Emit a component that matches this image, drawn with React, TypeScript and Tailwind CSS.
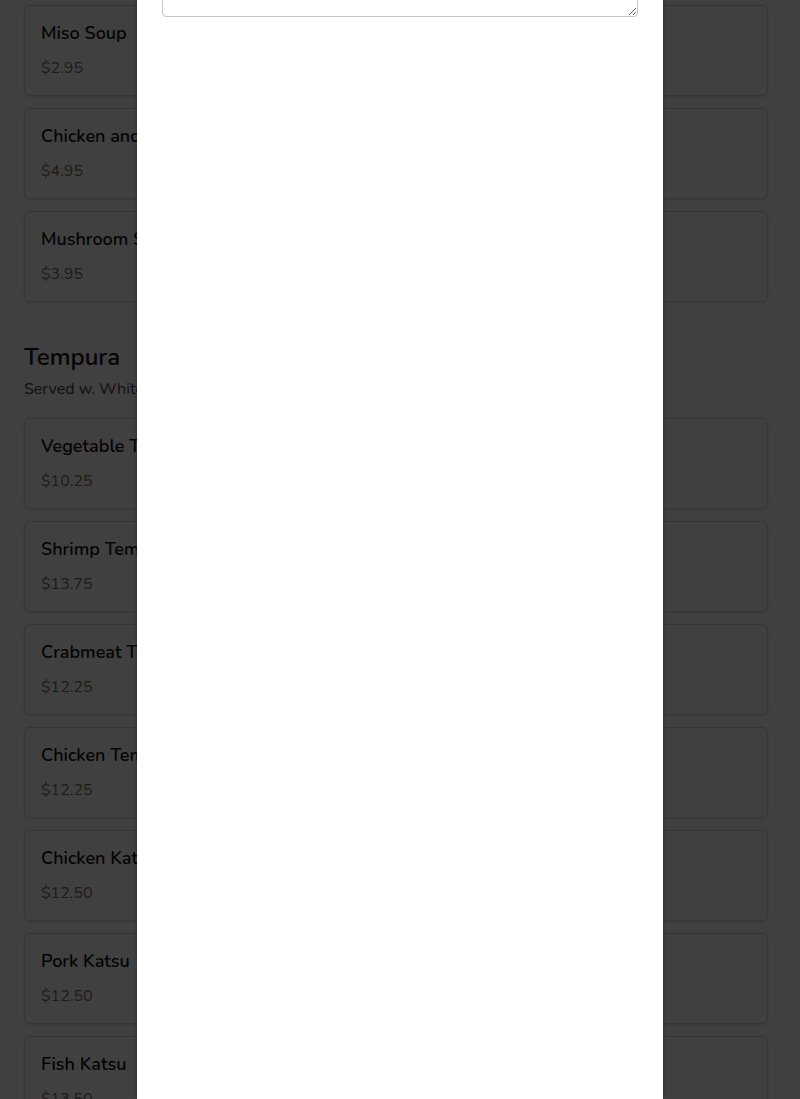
const soups = [
  { name: 'Egg Drop Soup', price: '$2.95' },
  { name: 'Miso Soup', price: '$2.95' },
  { name: 'Chicken and Corn Soup', price: '$4.95' },
  { name: 'Mushroom Soup', price: '$3.95' },
]

const tempura = [
  { name: 'Vegetable Tempura', price: '$10.25' },
  { name: 'Shrimp Tempura', price: '$13.75' },
  { name: 'Crabmeat Tempura', price: '$12.25' },
  { name: 'Chicken Tempura', price: '$12.25' },
  { name: 'Chicken Katsu', price: '$12.50' },
  { name: 'Pork Katsu', price: '$12.50' },
  { name: 'Fish Katsu', price: '$13.50' },
]

function MenuCard({ name, price }: { name: string; price: string }) {
  return (
    <div className="rounded-md border border-[#d6d6d6] bg-white px-4 pt-[13px] pb-[15px] shadow-[0_1px_3px_rgba(0,0,0,0.12)]">
      <h3 className="text-[18px] leading-7 font-semibold text-[#111]">{name}</h3>
      <p className="mt-[9px] text-[16px] leading-6 text-[#7a6f62]">{price}</p>
    </div>
  )
}

export default function App() {
  return (
    <div className="relative h-[1099px] overflow-hidden bg-white font-['Nunito','Noto_Sans',sans-serif]">
      <div className="-mt-[98px] pl-6 pr-8">
        <section className="flex flex-col gap-3">
          {soups.map((s) => (
            <MenuCard key={s.name} {...s} />
          ))}
        </section>

        <section className="mt-[39px]">
          <h2 className="text-[24px] leading-8 font-semibold text-[#111]">Tempura</h2>
          <p className="mt-[4px] text-[16px] leading-6 text-[#444]">Served w. White Rice</p>
          <div className="mt-[17px] flex flex-col gap-3">
            {tempura.map((t) => (
              <MenuCard key={t.name} {...t} />
            ))}
          </div>
        </section>
      </div>

      {/* modal overlay */}
      <div className="fixed inset-0 flex justify-center bg-black/75">
        <div className="flex h-full w-[526px] flex-col bg-white px-[25px] shadow-[0_0_4px_rgba(0,0,0,0.3)]">
          <textarea className="-mt-[83px] h-[100px] w-full rounded border border-[#c4c4c4] bg-white p-2 text-sm" />
        </div>
      </div>
    </div>
  )
}
